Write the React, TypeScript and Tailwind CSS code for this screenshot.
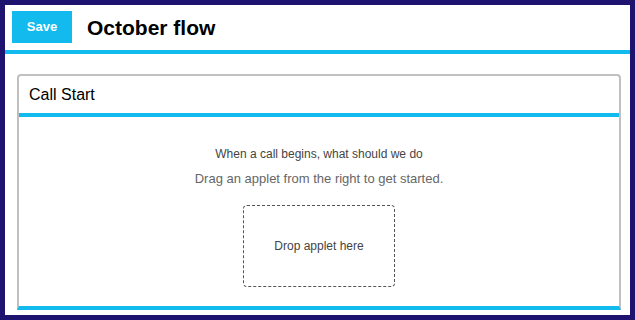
export default function App() {
  return (
    <div
      className="box-border flex h-[320px] w-[635px] flex-col border-[5px] border-[#1e136e] bg-white"
      style={{ fontFamily: '"Liberation Sans", Arial, sans-serif' }}
    >
      {/* Header */}
      <div className="flex h-[49px] shrink-0 items-center border-b-4 border-[#12baee] px-[7px] pb-[1px]">
        <button className="flex h-[32px] w-[60px] items-center justify-center bg-[#12baee] text-[13px] font-bold text-white">
          Save
        </button>
        <h1 className="ml-[15px] text-[21px] font-bold leading-none text-black">
          October flow
        </h1>
      </div>

      {/* Flow area */}
      <div className="flex-1 pl-[12px] pr-[9px] pt-[20px]">
        <div className="flex h-[236px] flex-col rounded-t-[4px] border-2 border-b-4 border-[#c0c0c0] border-b-[#12baee]">
          <div className="flex h-[41px] shrink-0 items-center border-b-4 border-[#12baee] px-[10px]">
            <span className="text-[16px] text-black">Call Start</span>
          </div>

          <div className="flex flex-1 flex-col items-center pt-[30px]">
            <p className="text-[12px] leading-[14px] text-[#444]">
              When a call begins, what should we do
            </p>
            <p className="mt-[10px] text-[13px] leading-[15px] text-[#666]">
              Drag an applet from the right to get started.
            </p>
            <div className="mt-[19px] flex h-[82px] w-[152px] items-center justify-center rounded-[4px] border border-dashed border-[#555]">
              <span className="text-[12px] text-[#444]">Drop applet here</span>
            </div>
          </div>
        </div>
      </div>
    </div>
  );
}
